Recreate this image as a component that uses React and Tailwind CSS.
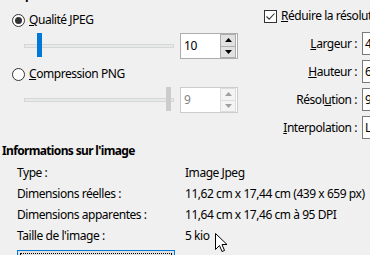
import React from "react";

function Radio({ checked }) {
  return (
    <div className="w-[13px] h-[13px] rounded-full border border-[#333333] bg-white flex items-center justify-center shrink-0">
      {checked && <div className="w-[7px] h-[7px] rounded-full bg-[#333333]" />}
    </div>
  );
}

function Arrow({ up, disabled }) {
  return (
    <svg width="7" height="4" viewBox="0 0 7 4" className="block">
      {up ? (
        <polygon points="0,4 7,4 3.5,0" fill={disabled ? "#a0a0a0" : "#000"} />
      ) : (
        <polygon points="0,0 7,0 3.5,4" fill={disabled ? "#a0a0a0" : "#000"} />
      )}
    </svg>
  );
}

function SpinBox({ value, disabled }) {
  return (
    <div
      className={`w-[58px] h-[26px] border bg-white flex items-center ${
        disabled ? "border-[#cccccc] text-[#838383]" : "border-[#adadad] text-black"
      }`}
    >
      <div className="flex-1 pl-[3px]">{value}</div>
      <div className="w-[16px] h-[24px] flex flex-col mr-[1px]">
        <div
          className={`flex-1 border flex items-center justify-center ${
            disabled ? "border-[#dddddd] bg-[#f4f4f4]" : "border-[#adadad] bg-[#e1e1e1]"
          }`}
        >
          <Arrow up disabled={disabled} />
        </div>
        <div
          className={`flex-1 border border-t-0 flex items-center justify-center ${
            disabled ? "border-[#dddddd] bg-[#f4f4f4]" : "border-[#adadad] bg-[#e1e1e1]"
          }`}
        >
          <Arrow disabled={disabled} />
        </div>
      </div>
    </div>
  );
}

function Slider({ pos, disabled }) {
  return (
    <div className="relative w-[150px] h-[26px] flex items-center">
      <div className="w-full h-[4px] bg-[#e7eaea] border border-[#d6d6d6]" />
      <div
        className={`absolute top-0 w-[5px] h-[24px] ${disabled ? "bg-[#cccccc]" : "bg-[#0078d7]"}`}
        style={{ left: pos }}
      />
    </div>
  );
}

function FieldRow({ children, value }) {
  return (
    <div className="h-[23px] flex items-center justify-end">
      <div className="pr-[5px]">{children}</div>
      <div className="w-[30px] h-[23px] border border-[#7a7a7a] bg-white pl-[2px] flex items-center shrink-0">
        {value}
      </div>
    </div>
  );
}

export default function App() {
  return (
    <div
      className="w-[370px] h-[255px] overflow-hidden bg-[#f0f0f0] text-black text-[12px] tracking-[-0.45px] relative flex flex-col"
      style={{ fontFamily: '"Noto Sans", sans-serif' }}
    >
      <div className="flex h-[143px] shrink-0">
        {/* Left column */}
        <div className="w-[264px] shrink-0 flex flex-col">
          <div className="-mt-[13px] h-[16px] leading-[16px] font-bold tracking-[-0.65px]">Compression</div>
          <div className="mt-[9px] h-[16px] leading-[16px] flex items-center pl-[12px] gap-[4px]">
            <Radio checked />
            <span>
              <span className="underline">Q</span>ualité JPEG
            </span>
          </div>
          <div className="mt-[5px] flex items-center pl-[24px] gap-[6px]">
            <Slider pos={13} />
            <SpinBox value="10" />
          </div>
          <div className="mt-[7px] h-[16px] leading-[16px] flex items-center pl-[12px] gap-[4px]">
            <Radio />
            <span>
              <span className="underline">C</span>ompression PNG
            </span>
          </div>
          <div className="mt-[5px] flex items-center pl-[24px] gap-[6px]">
            <Slider pos={142} disabled />
            <SpinBox value="9" disabled />
          </div>
        </div>
        {/* Right column */}
        <div className="flex-1 flex flex-col min-w-0">
          <div className="mt-[9px] h-[14px] leading-[14px] flex items-center gap-[4px] whitespace-nowrap">
            <div className="w-[13px] h-[13px] border border-[#333333] bg-white flex items-center justify-center shrink-0">
              <svg width="11" height="11" viewBox="0 0 11 11">
                <path d="M1.5 5.5 L4.2 8.2 L9.5 2.5" fill="none" stroke="#333" strokeWidth="1.1" />
              </svg>
            </div>
            <span>
              <span className="underline">R</span>éduire la résolution
            </span>
          </div>
          <div className="mt-[9px] flex flex-col gap-[5px] -mr-[22px]">
            <FieldRow value="4">
              <span className="underline">L</span>argeur :
            </FieldRow>
            <FieldRow value="6">
              <span className="underline">H</span>auteur :
            </FieldRow>
            <FieldRow value="9">
              Résol<span className="underline">u</span>tion :
            </FieldRow>
            <FieldRow value="L">
              <span className="underline">I</span>nterpolation :
            </FieldRow>
          </div>
        </div>
      </div>

      <div className="h-[16px] leading-[16px] pl-[2px] font-bold tracking-[-0.65px]">Informations sur l'image</div>
      <div className="mt-[3px] flex flex-col pl-[17px]">
        {[
          ["Type :", "Image Jpeg"],
          ["Dimensions réelles :", "11,62 cm x 17,44 cm (439 x 659 px)"],
          ["Dimensions apparentes :", "11,64 cm x 17,46 cm à 95 DPI"],
          ["Taille de l'image :", "5 kio"],
        ].map(([k, v]) => (
          <div key={k} className="h-[21px] flex items-center whitespace-nowrap">
            <div className="w-[168px] shrink-0">{k}</div>
            <div>{v}</div>
          </div>
        ))}
        <div className="mt-[4px] w-[158px] h-[24px] border border-[#0078d7] bg-[#e1e1e1] p-[2px]">
          <div className="w-full h-full border border-dotted border-black" />
        </div>
      </div>

      <svg
        className="absolute left-[215px] top-[233px]"
        width="13"
        height="20"
        viewBox="0 0 13 20"
      >
        <path
          d="M0.5 0.5 L0.5 16.5 L4.5 12.5 L7 18.5 L9.5 17.5 L7 11.5 L12 11.5 Z"
          fill="#ffffff"
          stroke="#000000"
          strokeWidth="1"
          strokeLinejoin="miter"
        />
      </svg>
    </div>
  );
}
